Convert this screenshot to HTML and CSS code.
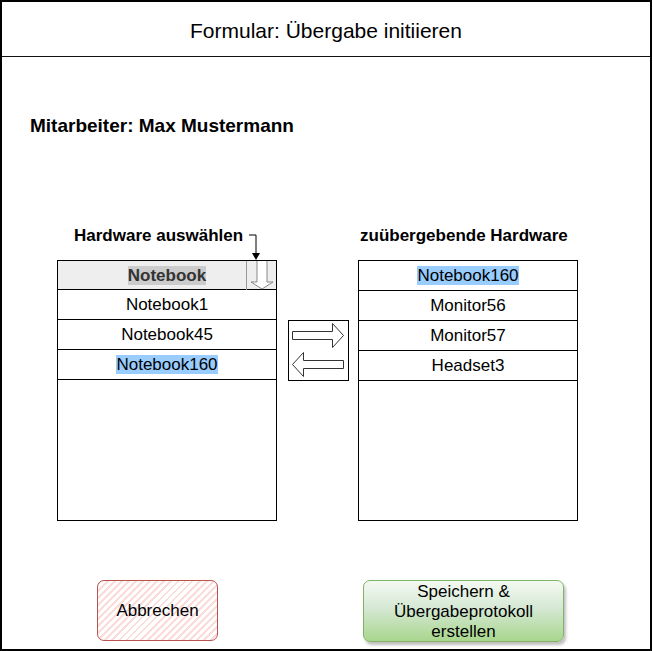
FILE: index.html
```html
<!DOCTYPE html>
<html>
	<head>
		<meta charset="utf-8" />
		<meta name="viewport" content="width=device-width, initial-scale=1.0" />
		<title>Übergabe initiieren</title>
		<link rel="stylesheet" href="styles.css">
	</head>
	<body>
		<div class="frame">
			<!-- Kopfzeile -->
			<div class="title">Formular: Übergabe initiieren</div>
			<!-- Inhalt -->
			<div class="content">
				<div class="employee">Mitarbeiter: Max Mustermann</div>

				<div class="transfer">
					<!-- Auswahl -->
					<div class="col">
						<div class="label label-left">
							Hardware auswählen
							<svg class="hint" width="24" height="40" viewBox="0 0 24 40">
								<path d="M0,9 H7 V28" fill="none" stroke="#000" stroke-width="1" />
								<path d="M3,27 L11,27 L7,34 Z" fill="#000" />
							</svg>
						</div>
						<div class="list">
							<div class="row row-head">
								<span></span>
								<span class="mark-gray">Notebook</span>
								<span class="scroll">
									<svg width="30" height="29" viewBox="0 0 30 29">
										<path d="M10,0 V21 H4 L15,28 L26,21 H20 V0" fill="#fff" stroke="#888" stroke-width="1" />
									</svg>
								</span>
							</div>
							<div class="row">Notebook1</div>
							<div class="row">Notebook45</div>
							<div class="row"><span class="mark">Notebook160</span></div>
						</div>
					</div>

					<!-- Verschieben -->
					<div class="swap">
						<svg width="60" height="60" viewBox="0 0 60 60">
							<path d="M4.5,11.5 H44.5 V3.5 L55.5,15.5 L44.5,27.5 V19.5 H4.5 Z" fill="#fff" stroke="#333" stroke-width="1" />
							<path d="M55.5,40.5 H15.5 V32.5 L4.5,44.5 L15.5,56.5 V48.5 H55.5 Z" fill="#fff" stroke="#333" stroke-width="1" />
						</svg>
					</div>

					<!-- Ziel -->
					<div class="col">
						<div class="label label-right">zuübergebende Hardware</div>
						<div class="list">
							<div class="row"><span class="mark">Notebook160</span></div>
							<div class="row">Monitor56</div>
							<div class="row">Monitor57</div>
							<div class="row">Headset3</div>
						</div>
					</div>
				</div>

				<!-- Buttons -->
				<div class="actions">
					<div class="btn btn-cancel">Abbrechen</div>
					<div class="btn btn-save">Speichern &amp;<br>Übergabeprotokoll<br>erstellen</div>
				</div>
			</div>
		</div>
	</body>
</html>
```

FILE: styles.css
```css
html,
body {
	margin: 0;
	padding: 0;
	background: #fff;
	font-family: "Liberation Sans", Arial, Helvetica, sans-serif;
	color: #000;
}
.frame
{
	box-sizing: border-box;
	width: 652px;
	height: 651px;
	border: 2px solid #000;
}
.title
{
	height: 55px;
	border-bottom: 1px solid #111;
	display: flex;
	align-items: center;
	justify-content: center;
	font-size: 21px;
	padding-top: 4px;
	box-sizing: border-box;
}
.content
{
	padding: 0 0 0 28px;
}
.employee
{
	margin-top: 58px;
	font-size: 19px;
	font-weight: bold;
	line-height: 22px;
}
/* Listen */
.transfer
{
	display: flex;
	align-items: flex-start;
	margin: 89px 0 0 27px;
}
.col
{
	width: 220px;
}
.label
{
	position: relative;
	height: 20px;
	line-height: 20px;
	margin-bottom: 14px;
	font-size: 17px;
	font-weight: bold;
	white-space: nowrap;
}
.label-left
{
	padding-left: 17px;
}
.label-right
{
	padding-left: 2px;
}
.hint
{
	position: absolute;
	left: 192px;
	top: 0;
}
.list
{
	box-sizing: border-box;
	height: 261px;
	border: 1px solid #000;
}
.row
{
	box-sizing: border-box;
	height: 30px;
	border-bottom: 1px solid #000;
	display: flex;
	align-items: center;
	justify-content: center;
	font-size: 17px;
}
.row-head
{
	display: grid;
	grid-template-columns: 30px 1fr 30px;
	align-items: center;
	justify-items: center;
	background: #eeeeee;
	font-weight: bold;
	color: #333;
	height: 29px;
	border-bottom: 1px solid #000;
}
.scroll
{
	align-self: stretch;
	width: 30px;
	border-left: 1px solid #999;
	display: flex;
	align-items: flex-start;
}
.mark
{
	background: #99ccff;
	line-height: 19px;
}
.mark-gray
{
	background: #cccccc;
	line-height: 19px;
}
.swap
{
	box-sizing: border-box;
	width: 61px;
	height: 61px;
	margin: 94px 9px 0 11px;
	border: 1px solid #000;
	display: flex;
}
.swap svg
{
	margin: -1px 0 0 -1px;
}
/* Buttons */
.actions
{
	display: flex;
	align-items: flex-start;
	margin: 59px 0 0 67px;
}
.btn
{
	box-sizing: border-box;
	display: flex;
	align-items: center;
	justify-content: center;
	text-align: center;
	font-size: 17px;
	line-height: 20px;
}
.btn-cancel
{
	width: 121px;
	height: 61px;
	border: 1.5px solid #b85450;
	border-radius: 7px;
	background: repeating-linear-gradient(-45deg, #fff 0, #fff 3px, #fbdcda 3px, #fbdcda 5px);
}
.btn-save
{
	width: 201px;
	height: 62px;
	margin-left: 145px;
	border: 1px solid #82b366;
	border-radius: 7px;
	background: linear-gradient(to bottom, #f4faf2 0%, #d5e8d4 45%, #a9d68e 100%);
	box-shadow: 2px 3px 3px rgba(0, 0, 0, 0.25);
	padding-top: 1px;
}
```
